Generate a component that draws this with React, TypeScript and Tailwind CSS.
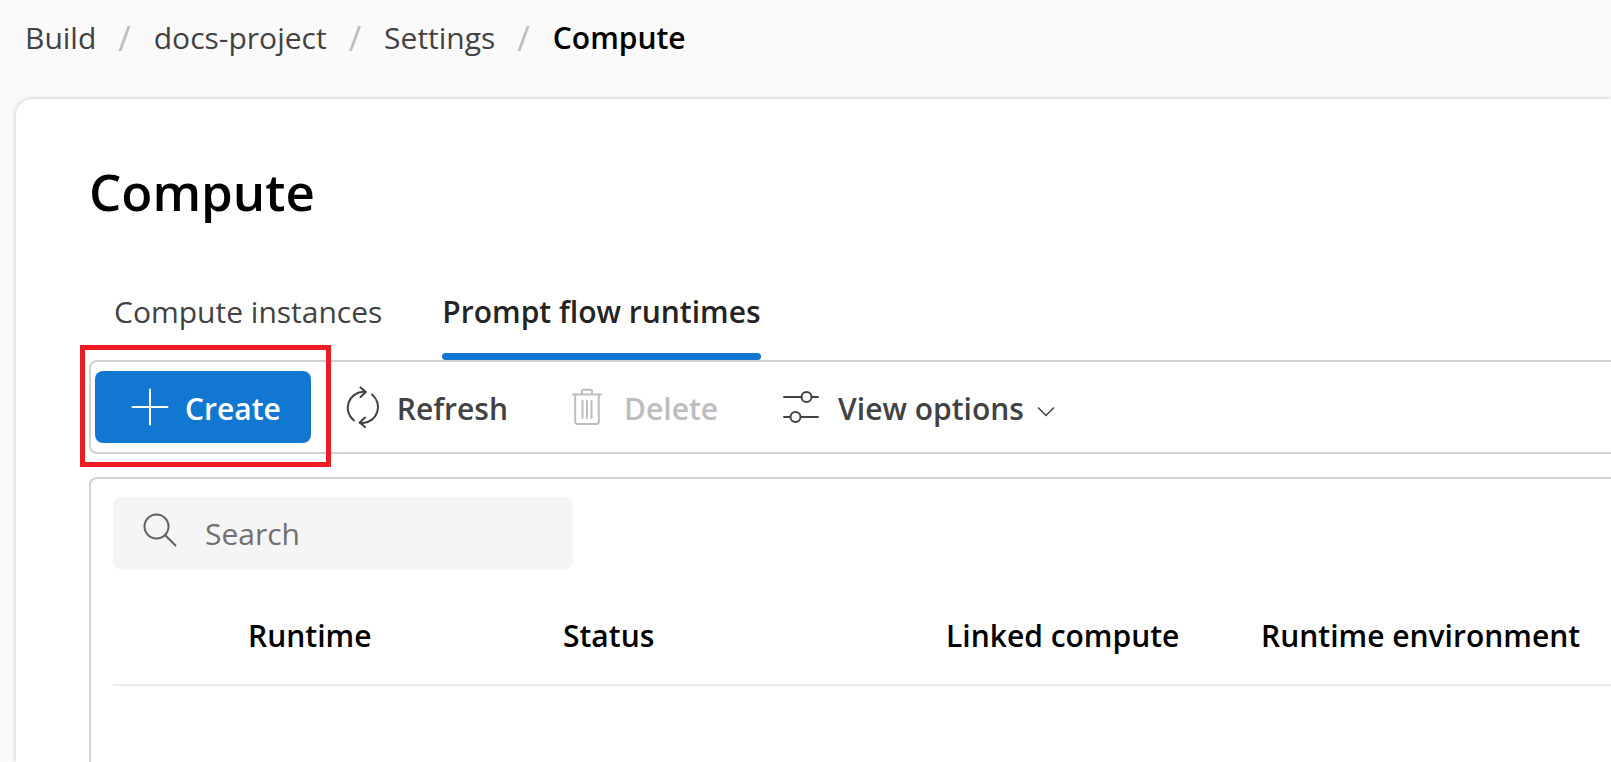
import React from "react";

const crumbs = ["Build", "docs-project", "Settings"];

function PlusIcon() {
  return (
    <svg width="38" height="38" viewBox="0 0 38 38" fill="none" stroke="currentColor" strokeWidth="2" strokeLinecap="round" aria-hidden="true">
      <path d="M19 1.500v35M1.500 19h35" />
    </svg>
  );
}

function RefreshIcon() {
  return (
    <svg width="36" height="42" viewBox="0 0 36 42" fill="none" stroke="currentColor" strokeWidth="2" strokeLinecap="round" strokeLinejoin="round" aria-hidden="true">
      <path d="M9 34.500A16 16 0 0 1 18 5.800L20.500 5.800" />
      <path d="M15.500 1.500l5.300 4.500-5.300 5" />
      <path d="M27 8.500A16 16 0 0 1 18 37L15 37" />
      <path d="M20 31.500l-5.300 4.900 5.300 4.600" />
    </svg>
  );
}

function TrashIcon() {
  return (
    <svg width="30" height="38" viewBox="0 0 30 38" fill="none" stroke="currentColor" strokeWidth="2" strokeLinecap="round" strokeLinejoin="round" aria-hidden="true">
      <path d="M1 6.500h28M10 6.500V3.200a1.500 1.500 0 0 1 1.500-1.500h7a1.500 1.500 0 0 1 1.500 1.500v3.300" />
      <path d="M3.200 6.500v27.500a2 2 0 0 0 2 2h19.600a2 2 0 0 0 2-2v-27.500" />
      <path d="M10.500 13v17M15 13v17M19.500 13v17" />
    </svg>
  );
}

function SlidersIcon() {
  return (
    <svg width="38" height="34" viewBox="0 0 38 34" fill="none" stroke="currentColor" strokeWidth="2" strokeLinecap="round" aria-hidden="true">
      <path d="M2 7h17.500M30 7h6M2 27h6M19 27h17" />
      <circle cx="24.500" cy="7" r="5" />
      <circle cx="13.500" cy="27" r="5" />
    </svg>
  );
}

function ChevronIcon() {
  return (
    <svg width="18" height="16" viewBox="0 0 18 16" fill="none" stroke="currentColor" strokeWidth="1.500" aria-hidden="true">
      <path d="M1 6.500l8 8 8-8" />
    </svg>
  );
}

function SearchIcon() {
  return (
    <svg width="34" height="34" viewBox="0 0 34 34" fill="none" stroke="currentColor" strokeWidth="2" strokeLinecap="round" aria-hidden="true">
      <circle cx="13.500" cy="13.500" r="12" />
      <path d="M22 22l10.500 10.500" />
    </svg>
  );
}

export default function App() {
  return (
    <div className="flex min-h-screen flex-col overflow-x-hidden bg-[#fafafa] font-['Open_Sans','Noto_Sans',sans-serif] text-[30px] leading-10 text-[#424242]">
      <nav aria-label="Breadcrumb" className="px-[25px] pt-[18px] pb-[41px]">
        <ol className="flex items-center gap-[23px] whitespace-nowrap">
          {crumbs.map((c) => (
            <li key={c} className="flex items-center gap-[22px]">
              <a href="#">{c}</a>
              <span aria-hidden="true" className="text-[34px] leading-10 text-[#bdbdbd]">/</span>
            </li>
          ))}
          <li aria-current="page" className="font-semibold text-black">Compute</li>
        </ol>
      </nav>

      <main className="ml-4 flex flex-1 flex-col rounded-tl-2xl bg-white pt-14 pl-[73px] shadow-[0_0_5px_rgba(0,0,0,0.22)]">
        <h1 className="text-[51px] leading-[72px] font-semibold text-black">Compute</h1>

        <div role="tablist" className="mt-[65px] flex gap-[60px] pl-[25px] whitespace-nowrap">
          <button role="tab" aria-selected="false" className="flex flex-col">
            Compute instances
          </button>
          <button role="tab" aria-selected="true" className="flex flex-col font-semibold text-[#242424]">
            Prompt flow runtimes
            <span className="mt-[21px] h-[7px] self-stretch rounded-full bg-[#1277d1]" />
          </button>
        </div>

        <div role="toolbar" className="flex items-center rounded-l-lg border-2 border-r-0 border-[#d1d1d1] py-[9px] pl-1 font-semibold whitespace-nowrap">
          <div className="relative">
            <button className="flex h-[72px] items-center gap-4 rounded-lg bg-[#1277d1] pr-[30px] pl-9 text-white">
              <PlusIcon />
              <span className="pt-1">Create</span>
            </button>
            <div className="pointer-events-none absolute -top-[26px] -right-5 -bottom-6 -left-[15px] border-[5px] border-[#ed1c24]" />
          </div>
          <button className="ml-[34px] flex items-center gap-4">
            <RefreshIcon />
            <span className="pt-1">Refresh</span>
          </button>
          <button disabled className="ml-16 flex items-center gap-[22px] text-[#bdbdbd]">
            <TrashIcon />
            <span className="pt-1">Delete</span>
          </button>
          <button className="ml-16 flex items-center gap-[18px]">
            <SlidersIcon />
            <span className="flex items-center gap-[13px] pt-1">
              View options
              <ChevronIcon />
            </span>
          </button>
        </div>

        <section className="mt-[23px] flex-1 rounded-tl-lg border-t-2 border-l-2 border-[#d1d1d1] pt-[18px] pl-[22px]">
          <label className="flex h-[72px] w-[460px] items-center gap-7 rounded-lg bg-[#f5f5f5] px-[30px]">
            <span className="pb-1.5 text-[#616161]"><SearchIcon /></span>
            <input type="text" aria-label="Search" placeholder="Search" className="min-w-0 flex-1 bg-transparent pt-0.5 outline-none placeholder:text-[#707070]" />
          </label>
          <table className="mt-3 w-full table-fixed border-collapse whitespace-nowrap text-black">
            <thead>
              <tr className="h-[104px] border-b-2 border-[#ebebeb] text-left">
                <th className="w-[135px]" />
                <th className="w-[315px] pt-1.5 font-semibold">Runtime</th>
                <th className="w-[383px] pt-1.5 font-semibold">Status</th>
                <th className="w-[315px] pt-1.5 font-semibold">Linked compute</th>
                <th className="pt-1.5 font-semibold">Runtime environment</th>
              </tr>
            </thead>
          </table>
        </section>
      </main>
    </div>
  );
}
